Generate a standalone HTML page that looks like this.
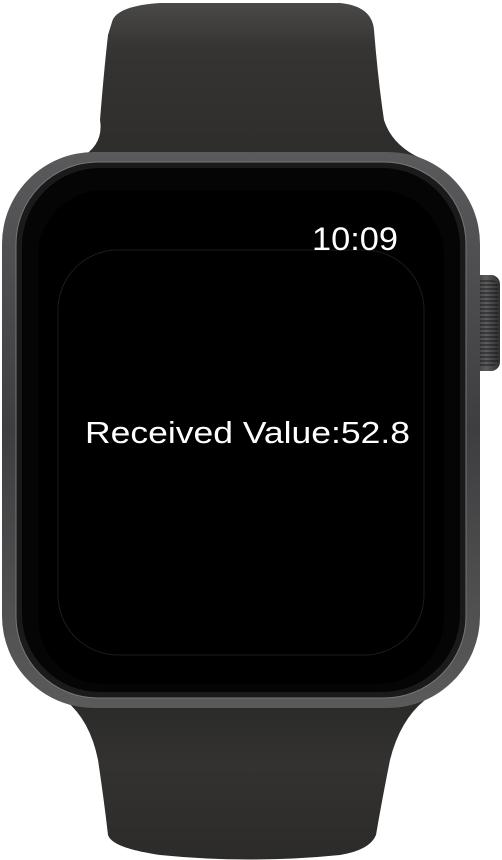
<!DOCTYPE html>
<html><head><style>
html,body{margin:0;padding:0;background:#fff;width:502px;height:860px;overflow:hidden}
svg{display:block}
text{font-family:"Liberation Sans",sans-serif;fill:#fff}
</style></head><body>
<svg width="502" height="860" viewBox="0 0 502 860">
<defs>
<linearGradient id="band" x1="0" y1="0" x2="0" y2="1">
<stop offset="0" stop-color="#4a4947"/><stop offset="0.3" stop-color="#353432"/><stop offset="1" stop-color="#2e2d2c"/>
</linearGradient>
<linearGradient id="band2" x1="0" y1="0" x2="0" y2="1">
<stop offset="0" stop-color="#2a2a29"/><stop offset="0.4" stop-color="#333230"/><stop offset="1" stop-color="#2c2b2a"/>
</linearGradient>
<linearGradient id="case" x1="0" y1="0" x2="0" y2="1">
<stop offset="0" stop-color="#5a5a5c"/><stop offset="0.5" stop-color="#3e3e40"/><stop offset="1" stop-color="#5a5a5b"/>
</linearGradient>
<linearGradient id="crown" x1="0" y1="0" x2="1" y2="0">
<stop offset="0" stop-color="#2a2a2b"/><stop offset="0.5" stop-color="#5c5c5e"/><stop offset="1" stop-color="#2f2f30"/>
</linearGradient>
<pattern id="ridges" width="4" height="4" patternUnits="userSpaceOnUse">
<rect width="4" height="2" fill="#000" opacity="0.35"/>
</pattern>
</defs>
<path d="M112 22 Q116 6 160 3 L340 3 Q372 6 374 30 Q378 80 384 120 Q392 145 420 158 L80 158 Q104 145 100 120 Q104 70 108 35 Z" fill="url(#band)"/>
<path d="M65 700 L425 700 Q400 720 390 760 Q382 800 376 835 Q370 850 340 855 Q250 864 160 855 Q112 848 108 835 Q104 800 98 760 Q90 720 65 700 Z" fill="url(#band2)"/>
<rect x="472" y="275" width="28" height="96" rx="9" fill="url(#crown)"/>
<rect x="475" y="280" width="23" height="86" rx="6" fill="url(#ridges)"/>
<rect x="2" y="152" width="478" height="556" rx="92" fill="url(#case)"/>
<rect x="16" y="162" width="450" height="536" rx="82" fill="#1a1a1b" stroke="#777" stroke-width="1"/>
<rect x="22" y="168" width="438" height="524" rx="78" fill="#050505"/>
<rect x="38" y="190" width="406" height="494" rx="66" fill="#000"/>
<rect x="58" y="250" width="366" height="405" rx="60" fill="none" stroke="#1c1c1c" stroke-width="1"/>
<text x="312" y="250" font-size="32" textLength="86" lengthAdjust="spacingAndGlyphs">10:09</text>
<text x="85" y="443" font-size="31" textLength="325" lengthAdjust="spacingAndGlyphs">Received Value:52.8</text>
</svg>
</body></html>
